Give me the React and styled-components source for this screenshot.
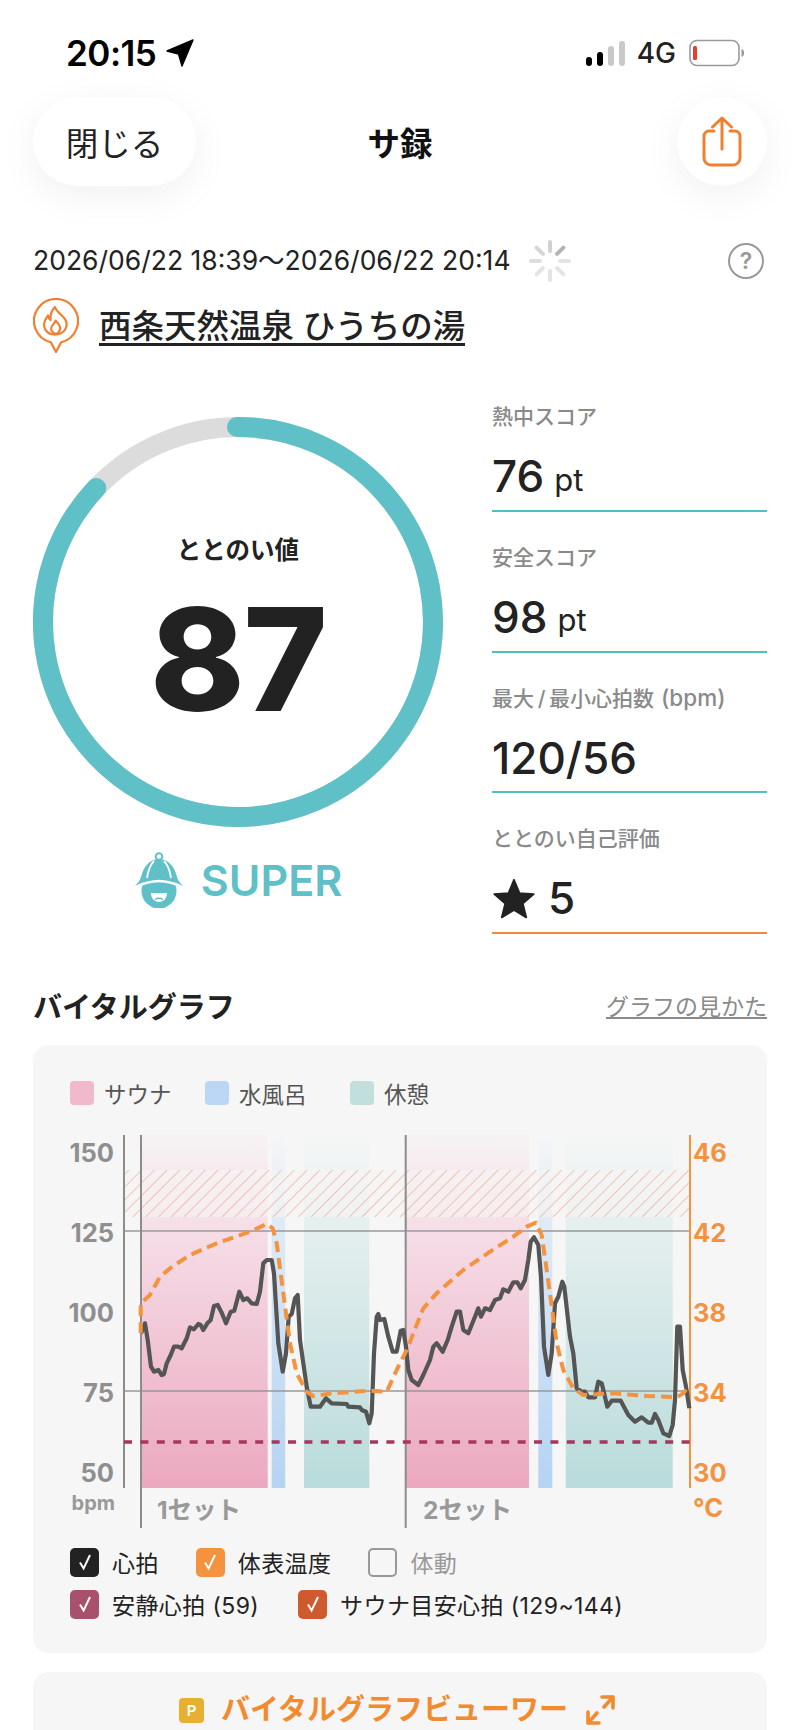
import styled, { createGlobalStyle } from 'styled-components';
import { useEffect } from 'react';

const TEAL = '#5fc0c8';
const ORANGE = '#f5923e';
const FONT = `Inter, "Noto Sans CJK JP", sans-serif`;

// traced from the two halves of the graph, in crop pixels
const toPoints = (left, right) => [
  ...left.map(([x, y]) => [50 + x / 3, 1120 + y / 3]),
  ...right.map(([x, y]) => [380 + x / 3, 1120 + y / 3]),
].map(p => p.map(n => n.toFixed(1)).join(',')).join(' ');

const heart = toPoints(
  [[273,640],[285,610],[293,660],[303,740],[312,755],[325,750],[335,765],[342,762],[350,730],[362,705],[372,680],[385,680],[395,685],[410,655],[420,622],[432,628],[445,612],[452,615],[460,630],[472,610],[482,600],[492,558],[503,555],[515,578],[528,610],[542,575],[553,572],[568,515],[580,540],[592,535],[605,550],[620,552],[630,515],[640,430],[650,420],[665,420],[672,460],[680,590],[685,670],[698,755],[708,700],[716,590],[725,582],[735,535],[743,525],[750,660],[760,730],[770,800],[782,860],[810,860],[828,835],[845,850],[890,852],[895,860],[930,862],[935,870],[948,875],[958,910],[965,880],[972,700],[980,590],[985,582],[990,600],[1003,597],[1015,650],[1028,695],[1040,695],[1052,632],[1060,630]],
  [[78,680],[85,750],[95,780],[115,795],[130,765],[150,720],[160,680],[170,670],[188,695],[203,660],[215,620],[230,575],[240,575],[250,630],[265,640],[285,590],[295,565],[303,590],[315,565],[330,570],[345,540],[360,535],[370,508],[385,515],[400,487],[412,487],[422,505],[435,480],[445,420],[452,365],[462,352],[475,375],[483,470],[492,680],[505,765],[515,700],[525,550],[535,530],[547,485],[553,500],[570,650],[580,700],[590,805],[605,815],[615,815],[625,832],[645,832],[655,785],[665,790],[682,860],[695,842],[722,842],[745,885],[765,905],[785,892],[805,908],[815,908],[825,882],[835,900],[850,940],[868,948],[878,915],[885,840],[892,620],[900,620],[908,750],[918,800],[928,865]]
);

const temp = toPoints(
  [[272,640],[272,550],[300,525],[330,470],[360,445],[420,405],[500,370],[600,335],[650,312],[668,325],[680,370],[700,520],[720,670],[740,760],[770,815],[790,828],[850,820],[960,812],[1010,815],[1040,750],[1075,680]],
  [[100,640],[130,565],[170,520],[250,450],[330,395],[400,350],[440,320],[468,308],[485,345],[510,520],[530,670],[550,750],[580,805],[610,825],[700,820],[800,828],[890,832],[910,820],[925,800]]
);

const zones = [
  { x: 141.7, w: 126, fill: 'url(#sauna)' },
  { x: 271.7, w: 13.5, fill: 'url(#water)' },
  { x: 304, w: 65.3, fill: 'url(#rest)' },
  { x: 406, w: 123, fill: 'url(#sauna)' },
  { x: 538.3, w: 14, fill: 'url(#water)' },
  { x: 565.7, w: 107, fill: 'url(#rest)' },
];

const leftTicks = [[150, 1152], [125, 1232], [100, 1312], [75, 1392], [50, 1472]];
const rightTicks = [[46, 1152], [42, 1232], [38, 1312], [34, 1392], [30, 1472]];

const stats = [
  { label: '熱中スコア', value: '76', unit: 'pt' },
  { label: '安全スコア', value: '98', unit: 'pt' },
  { label: '最大\u2009/\u2009最小心拍数', note: '(bpm)', value: '120/56' },
];

const spokes = [.35, .55, .2, .2, .2, .2, .25, .3];

function Spinner() {
  return (
    <SpinnerSvg viewBox="-21 -21 42 42">
      {spokes.map((o, i) => (
        <line key={i} x1="0" y1="-10" x2="0" y2="-19" stroke="#777" strokeOpacity={o} strokeWidth="4" strokeLinecap="round" transform={`rotate(${i * 45})`} />
      ))}
    </SpinnerSvg>
  );
}

function Check({ color, children, muted }) {
  return (
    <CheckItem $muted={muted}>
      <Box $color={color}>
        {color && <svg width="16" height="20" viewBox="0 0 16 20"><path d="M3 10.5l3.6 6L13 3" fill="none" stroke="#fff" strokeWidth="2" /></svg>}
      </Box>
      {children}
    </CheckItem>
  );
}

function Graph() {
  return (
    <GraphSvg viewBox="60 1120 670 415" width="670" height="415">
      <defs>
        <linearGradient id="sauna" x1="0" y1="0" x2="0" y2="1">
          <stop offset="0" stopColor="#f6f3f4" />
          <stop offset=".3" stopColor="#f5dbe5" />
          <stop offset="1" stopColor="#eba8bf" />
        </linearGradient>
        <linearGradient id="water" x1="0" y1="0" x2="0" y2="1">
          <stop offset="0" stopColor="#f5f6f7" />
          <stop offset=".3" stopColor="#dbe8f6" />
          <stop offset="1" stopColor="#b5d3f3" />
        </linearGradient>
        <linearGradient id="rest" x1="0" y1="0" x2="0" y2="1">
          <stop offset="0" stopColor="#f5f6f6" />
          <stop offset=".3" stopColor="#e2eeed" />
          <stop offset="1" stopColor="#b9dbdb" />
        </linearGradient>
        <pattern id="hatch" width="9" height="9" patternUnits="userSpaceOnUse" patternTransform="rotate(45)">
          <line x1="0" y1="0" x2="0" y2="9" stroke="#e07f5c" strokeOpacity=".75" strokeWidth="1.1" />
        </pattern>
      </defs>

      {zones.map((z, i) => <rect key={i} x={z.x} y="1135" width={z.w} height="353" fill={z.fill} />)}

      <rect x="124" y="1170" width="566" height="47" fill="#f6f5f4" fillOpacity=".6" />
      <rect x="124" y="1170" width="566" height="47" fill="url(#hatch)" />

      <g stroke="#999" strokeWidth="1.5">
        <line x1="124" y1="1231" x2="690" y2="1231" />
        <line x1="124" y1="1391" x2="690" y2="1391" />
      </g>
      <g stroke="#8c8c8c" strokeWidth="2">
        <line x1="124" y1="1135" x2="124" y2="1488" />
        <line x1="141" y1="1135" x2="141" y2="1528" />
        <line x1="405.7" y1="1135" x2="405.7" y2="1528" />
      </g>
      <line x1="690" y1="1135" x2="690" y2="1488" stroke={ORANGE} strokeWidth="2" />

      <line x1="124" y1="1442" x2="690" y2="1442" stroke="#a8365f" strokeWidth="3.5" strokeDasharray="8 8.4" />
      <polyline points={heart} fill="none" stroke="#555" strokeWidth="4.2" strokeLinejoin="round" />
      <polyline points={temp} fill="none" stroke={ORANGE} strokeWidth="4" strokeDasharray="11 6" strokeLinejoin="round" />

      {leftTicks.map(([v, y]) => <Tick key={v} x="114" y={y} textAnchor="end" fill="#8f8f8f">{v}</Tick>)}
      {rightTicks.map(([v, y]) => <Tick key={v} x="693" y={y} fill={ORANGE}>{v}</Tick>)}
      <Unit x="115" y="1510" textAnchor="end" fill="#999">bpm</Unit>
      <Tick x="693" y="1507" fill={ORANGE}>°C</Tick>
      <SetLabel x="157" y="1519">1セット</SetLabel>
      <SetLabel x="423" y="1519">2セット</SetLabel>
    </GraphSvg>
  );
}

export default function App() {
  useEffect(() => {
    document.title = 'サ録';
  }, []);

  return (<>
    <GlobalStyle />
    <Page>
      <StatusBar>
        <Time>20:15
          <svg width="28" height="28" viewBox="0 0 28 28"><path d="M27 1 L16 27 L12.6 15.2 L1 12 Z" fill="#000" stroke="#000" strokeWidth="1.4" strokeLinejoin="round" /></svg>
        </Time>
        <StatusRight>
          <Signal>
            <Bar $h={9} /><Bar $h={14} /><Bar $h={20} $off /><Bar $h={25} $off />
          </Signal>
          <Network>4G</Network>
          <svg width="58" height="28" viewBox="0 0 58 28">
            <rect x="2" y="1.5" width="49" height="25" rx="7" fill="none" stroke="#9a9a9a" strokeWidth="1.6" />
            <rect x="5" y="7" width="4" height="14" rx="1.5" fill="#ea3b35" />
            <path d="M53.5 10c2 .6 2.6 2.2 2.6 4s-.6 3.4-2.6 4z" fill="#9a9a9a" />
          </svg>
        </StatusRight>
      </StatusBar>

      <Header>
        <CloseButton>閉じる</CloseButton>
        <Title>サ録</Title>
        <ShareButton>
          <svg width="42" height="52" viewBox="0 0 42 52" fill="none" stroke="#f08030" strokeWidth="3" strokeLinecap="round" strokeLinejoin="round">
            <path d="M13 15H8a5 5 0 0 0-5 5v22a7 7 0 0 0 7 7h22a7 7 0 0 0 7-7V20a5 5 0 0 0-5-5h-5" />
            <path d="M21 33V2M11.5 11 21 2l9.5 9" />
          </svg>
        </ShareButton>
      </Header>

      <DateRow>
        <DateText>2026/06/22 18:39〜2026/06/22 20:14</DateText>
        <Spinner />
        <Help>?</Help>
      </DateRow>

      <Venue>
        <svg width="46" height="55" viewBox="0 0 46 55" fill="none" stroke="#f08030" strokeWidth="2.2" strokeLinejoin="round" strokeLinecap="round">
          <path d="M18 44.4A22 22 0 1 1 28 44.4L23 54Z" fill="#fff" />
          <path d="M22 9c1.500 5.500 8 8 10.500 13 3 6-.5 14-9.500 14.500S10 31 11.500 24c.6-2.800 2.400-4.800 3.500-6.500.5 2 1 3.200 2.500 4.500C17 17 19 12 22 9Z" />
          <path d="M23 36c-4-1-6-4.500-4-8 1.200-2 3-3 3.500-5.500 2.500 2.500 5.500 5.500 4.500 9-.5 2-2 3.800-4 4.500Z" />
        </svg>
        <VenueName>西条天然温泉 ひうちの湯</VenueName>
      </Venue>

      <Main>
        <ScoreColumn>
          <RingWrap>
            <svg width="410" height="410" viewBox="-205 -205 410 410" fill="none">
              <circle r="195" stroke="#dcdcdc" strokeWidth="20" />
              <path d="M -1 -195 A 195 195 0 1 1 -141.700 -134" stroke={TEAL} strokeWidth="20" strokeLinecap="round" />
            </svg>
            <RingCenter>
              <RingLabel>ととのい値</RingLabel>
              <RingValue>87</RingValue>
            </RingCenter>
          </RingWrap>
          <Grade>
            <svg width="50" height="56" viewBox="0 0 50 56" fill={TEAL}>
              <circle cx="25" cy="4.500" r="3.300" fill="none" stroke={TEAL} strokeWidth="2" />
              <circle cx="25" cy="39" r="17.500" />
              <path d="M25 7C15 7 9 16 7 25 6.500 28 4 31 1 34 9 30 17 27.500 25 27.500S41 30 49 34C46 31 43.500 28 43 25 41 16 35 7 25 7Z" />
              <path d="M1 35.500C9 31.500 17 29 25 29S41 31.500 49 35.500" fill="none" stroke="#fff" strokeWidth="2.400" />
              <path d="M17 41h16c0 5.500-3.500 9-8 9s-8-3.500-8-9Z" fill="#fff" />
              <path d="M21 47.500c2.500-1.500 5.500-1.500 8 0" fill="none" stroke={TEAL} strokeWidth="1.400" />
              <path d="M20 9c-4 4-6 10-7 17M30 9c4 4 6 10 7 17" fill="none" stroke="#fff" strokeWidth="1.800" />
            </svg>
            <GradeText>SUPER</GradeText>
          </Grade>
        </ScoreColumn>

        <StatColumn>
          {stats.map(s => (
            <Stat key={s.label}>
              <StatLabel>{s.label}{s.note && <StatNote>{s.note}</StatNote>}</StatLabel>
              <StatValue>{s.value}{s.unit && <StatUnit>{s.unit}</StatUnit>}</StatValue>
            </Stat>
          ))}
          <Stat $last>
            <StatLabel>ととのい自己評価</StatLabel>
            <StatValue>
              <svg width="44" height="42" viewBox="0 0 24 23"><path d="M12 1.500l3 7.300 7.800.6-6 5.100 1.900 7.600L12 18.100l-6.700 4 1.900-7.600-6-5.100 7.800-.6z" fill="#222" stroke="#222" strokeWidth="1" strokeLinejoin="round" /></svg>
              <StarScore>5</StarScore>
            </StatValue>
          </Stat>
        </StatColumn>
      </Main>

      <SectionHead>
        <SectionTitle>バイタルグラフ</SectionTitle>
        <SectionLink>グラフの見かた</SectionLink>
      </SectionHead>

      <Card>
        <Legend>
          <LegendItem $w={135}><Swatch $color="#f0b9cc" />サウナ</LegendItem>
          <LegendItem $w={145}><Swatch $color="#bcd7f5" />水風呂</LegendItem>
          <LegendItem><Swatch $color="#c2dfde" />休憩</LegendItem>
        </Legend>
        <Graph />
        <Checks>
          <CheckRow $gap={37}>
            <Check color="#222">心拍</Check>
            <Check color={ORANGE}>体表温度</Check>
            <Check muted>体動</Check>
          </CheckRow>
          <CheckRow $gap={39}>
            <Check color="#a9506c">安静心拍 (59)</Check>
            <Check color="#cf5a2e">サウナ目安心拍 (129~144)</Check>
          </CheckRow>
        </Checks>
      </Card>

      <ViewerCard>
        <PBadge>P</PBadge>
        <ViewerText>バイタルグラフビューワー</ViewerText>
        <svg width="30" height="32" viewBox="0 0 30 32" fill="none" stroke="#f28a2e" strokeWidth="3.6" strokeLinecap="round" strokeLinejoin="round">
          <path d="M17 3h11v11M28 3 19 13M3 18v11h11M3 29l9-10" />
        </svg>
      </ViewerCard>
    </Page>
  </>);
}

const GlobalStyle = createGlobalStyle`
  html, body {
    margin: 0;
    padding: 0;
    background: #fff;
    height: 1730px;
    overflow: hidden;
  }
  body {
    font-family: ${FONT};
    color: #222;
  }
`;
const Page = styled.div`
  width: 800px;
  height: 1730px;
  overflow: hidden;
  box-sizing: border-box;
  padding: 0 33px;
  background: #fff;
`;
const StatusBar = styled.div`
  height: 97px;
  box-sizing: border-box;
  padding: 38px 21px 0 33px;
  display: flex;
  justify-content: space-between;
  align-items: flex-start;
`;
const Time = styled.div`
  display: flex;
  align-items: center;
  gap: 10px;
  font-size: 35px;
  font-weight: 600;
  line-height: 30px;
  color: #000;
  letter-spacing: -0.5px;
`;
const StatusRight = styled.div`
  display: flex;
  align-items: center;
  gap: 12px;
  height: 30px;
`;
const Signal = styled.div`
  display: flex;
  align-items: flex-end;
  gap: 5px;
  height: 26px;
`;
const Bar = styled.span`
  width: 6px;
  height: ${p => p.$h}px;
  border-radius: 3px;
  background: ${p => (p.$off ? '#c9c9c9' : '#000')};
`;
const Network = styled.span`
  font-size: 28px;
  font-weight: 500;
  color: #222;
`;
const Header = styled.header`
  display: grid;
  grid-template-columns: 1fr auto 1fr;
  align-items: center;
  height: 89px;
`;
const CloseButton = styled.button`
  justify-self: start;
  width: 163px;
  height: 89px;
  border: 0;
  border-radius: 45px;
  background: #fff;
  box-shadow: 0 10px 40px rgba(0, 0, 0, 0.06);
  font-family: ${FONT};
  font-size: 32.5px;
  color: #222;
  padding: 0;
`;
const Title = styled.h1`
  margin: 0;
  font-size: 32.5px;
  font-weight: 700;
  color: #111;
`;
const ShareButton = styled.button`
  justify-self: end;
  width: 90px;
  height: 89px;
  border: 0;
  border-radius: 50%;
  background: #fff;
  box-shadow: 0 10px 40px rgba(0, 0, 0, 0.06);
  padding: 0;
  display: flex;
  align-items: center;
  justify-content: center;
`;
const DateRow = styled.div`
  display: flex;
  align-items: center;
  height: 40px;
  margin-top: 55px;
`;
const DateText = styled.span`
  font-size: 26.5px;
  line-height: 34px;
  padding-bottom: 3px;
  color: #222;
  white-space: nowrap;
`;
const SpinnerSvg = styled.svg`
  width: 42px;
  height: 42px;
  margin-left: 18px;
`;
const Help = styled.span`
  margin-left: auto;
  margin-right: 3px;
  width: 32px;
  height: 32px;
  border: 2.5px solid #999;
  border-radius: 50%;
  display: flex;
  align-items: center;
  justify-content: center;
  font-size: 23px;
  font-weight: 600;
  color: #999;
`;
const Venue = styled.div`
  display: flex;
  align-items: flex-start;
  gap: 20px;
  height: 55px;
  margin-top: 17px;
`;
const VenueName = styled.span`
  margin-top: 13px;
  font-size: 32.5px;
  font-weight: 500;
  line-height: 32px;
  white-space: nowrap;
  color: #222;
  border-bottom: 3px solid #222;
`;
const Main = styled.div`
  display: flex;
  justify-content: space-between;
  margin-top: 49px;
`;
const ScoreColumn = styled.div`
  width: 410px;
  padding-top: 15px;
  display: flex;
  flex-direction: column;
  align-items: center;
`;
const RingWrap = styled.div`
  position: relative;
  width: 410px;
  height: 410px;
`;
const RingCenter = styled.div`
  position: absolute;
  inset: 0;
  display: flex;
  flex-direction: column;
  align-items: center;
  padding-top: 116px;
`;
const RingLabel = styled.div`
  font-size: 24.5px;
  font-weight: 700;
  line-height: 34px;
`;
const RingValue = styled.div`
  font-size: 143px;
  font-weight: 800;
  line-height: 150px;
  margin-top: 17px;
  letter-spacing: -1.5px;
  color: #222;
`;
const Grade = styled.div`
  display: flex;
  align-items: center;
  gap: 17px;
  margin-top: 25px;
  height: 56px;
`;
const GradeText = styled.span`
  font-size: 43px;
  font-weight: 600;
  color: ${TEAL};
`;
const StatColumn = styled.div`
  width: 275px;
  display: flex;
  flex-direction: column;
  gap: 30.6px;
`;
const Stat = styled.div`
  height: 110px;
  box-sizing: border-box;
  border-bottom: 2px solid ${p => (p.$last ? '#f0883e' : '#4fc0c2')};
`;
const StatLabel = styled.div`
  font-size: 21px;
  font-weight: 500;
  line-height: 30px;
  color: #8a8a8a;
  white-space: nowrap;
`;
const StatNote = styled.span`
  font-size: 22.5px;
  margin-left: 7px;
`;
const StatValue = styled.div`
  display: flex;
  align-items: center;
  height: 78px;
  padding-top: 10px;
  box-sizing: border-box;
  font-size: 44px;
  font-weight: 550;
  color: #222;
`;
const StatUnit = styled.span`
  font-size: 31px;
  font-weight: 400;
  margin-left: 10px;
  padding-top: 6px;
`;
const StarScore = styled.span`
  margin-left: 12px;
`;
const SectionHead = styled.div`
  display: flex;
  justify-content: space-between;
  align-items: center;
  height: 40px;
  margin-top: 51px;
`;
const SectionTitle = styled.h2`
  margin: 0;
  font-size: 29px;
  font-weight: 700;
  color: #222;
`;
const SectionLink = styled.a`
  font-size: 23px;
  color: #8a8a8a;
  text-decoration: underline;
`;
const Card = styled.section`
  margin-top: 20px;
  height: 608px;
  box-sizing: border-box;
  padding-top: 36px;
  border-radius: 16px;
  background: #f6f6f6;
`;
const Legend = styled.div`
  display: flex;
  height: 24px;
  padding-left: 37px;
`;
const LegendItem = styled.div`
  display: flex;
  align-items: center;
  gap: 10px;
  width: ${p => (p.$w ? `${p.$w}px` : 'auto')};
  font-size: 22.5px;
  color: #555;
`;
const Swatch = styled.span`
  width: 24px;
  height: 24px;
  border-radius: 4px;
  background: ${p => p.$color};
`;
const GraphSvg = styled.svg`
  display: block;
  margin: 15px 0 0 27px;
`;
const Tick = styled.text`
  font-size: 25.5px;
  font-weight: 700;
  dominant-baseline: central;
`;
const Unit = styled.text`
  font-size: 20px;
  font-weight: 700;
`;
const SetLabel = styled.text`
  font-size: 24.5px;
  font-weight: 700;
  fill: #999;
`;
const Checks = styled.div`
  display: flex;
  flex-direction: column;
  gap: 13px;
  margin-top: 13px;
  padding-left: 37px;
`;
const CheckRow = styled.div`
  display: flex;
  gap: ${p => p.$gap}px;
  height: 29px;
`;
const CheckItem = styled.div`
  display: flex;
  align-items: center;
  gap: 13px;
  font-size: 23px;
  letter-spacing: 0.4px;
  color: ${p => (p.$muted ? '#999' : '#222')};
  white-space: nowrap;
`;
const Box = styled.span`
  width: 29px;
  height: 29px;
  box-sizing: border-box;
  border-radius: 5px;
  display: flex;
  align-items: center;
  justify-content: center;
  background: ${p => p.$color || 'transparent'};
  border: ${p => (p.$color ? '0' : '2.5px solid #999')};
`;
const ViewerCard = styled.section`
  margin-top: 19px;
  height: 120px;
  box-sizing: border-box;
  padding: 22px 6px 0 0;
  border-radius: 16px;
  background: #f6f6f6;
  display: flex;
  justify-content: center;
  align-items: flex-start;
  gap: 17px;
`;
const PBadge = styled.span`
  width: 25px;
  height: 25px;
  margin-top: 4px;
  border-radius: 4px;
  background: #e8b030;
  color: #fff;
  font-size: 15px;
  font-weight: 600;
  display: flex;
  align-items: center;
  justify-content: center;
`;
const ViewerText = styled.span`
  font-size: 29px;
  font-weight: 700;
  line-height: 32px;
  color: #f28a2e;
  white-space: nowrap;
`;
